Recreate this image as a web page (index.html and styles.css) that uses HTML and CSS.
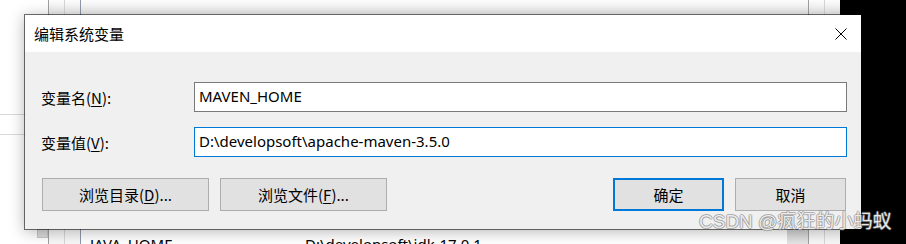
FILE: index.html
```html
<!DOCTYPE html>
<html lang="zh-CN">

<head>
    <meta charset="UTF-8">
    <title>编辑系统变量</title>
    <link rel="stylesheet" href="styles.css">
</head>

<body>

    <div class="skaerm">

        <!-- vinduet bagved (miljøvariabler) -->
        <div class="bagvindue">
            <div class="kol kol-kant">
                <div class="kant-linje top-linje"></div>
                <div class="kant-linje"></div>
                <div class="kant-boks"></div>
            </div>
            <div class="kol kol-smal kol-a">
                <div class="hoved"></div>
            </div>
            <div class="kol kol-smal kol-b">
                <div class="hoved"></div>
            </div>
            <div class="kol kol-liste">
                <div class="hoved"></div>
                <div class="raekke">
                    <span class="navn">JAVA_HOME</span>
                    <span class="vaerdi">D:\developsoft\jdk-17.0.1</span>
                    <span class="rulle-boks"></span>
                </div>
            </div>
            <div class="kol kol-smal kol-c">
                <div class="hoved"></div>
            </div>
            <div class="kol kol-smal kol-d">
                <div class="hoved"></div>
            </div>
        </div>

        <!-- selve dialogen -->
        <div class="dialog">
            <div class="titel">
                <span>编辑系统变量</span>
                <svg class="luk" width="12" height="12" viewBox="0 0 12 12">
                    <path d="M0.5 0.5 L11.5 11.5 M11.5 0.5 L0.5 11.5" stroke="#000" stroke-width="1" fill="none" />
                </svg>
            </div>

            <div class="indhold">
                <div class="felter">
                    <label>变量名(<u>N</u>):</label>
                    <div class="felt">MAVEN_HOME</div>

                    <label>变量值(<u>V</u>):</label>
                    <div class="felt aktiv">D:\developsoft\apache-maven-3.5.0</div>
                </div>

                <div class="knapper">
                    <button class="knap bred">浏览目录(<u>D</u>)...</button>
                    <button class="knap bred">浏览文件(<u>F</u>)...</button>
                    <button class="knap smal ok">确定</button>
                    <button class="knap smal">取消</button>
                </div>
            </div>
        </div>

        <div class="vandmaerke">CSDN @疯狂的小蚂蚁</div>

    </div>

</body></html>
```

FILE: styles.css
```css
body {
    margin: 0;
    background-color: #000;
    font-family: "Noto Sans", "Noto Sans CJK SC", sans-serif;
    font-size: 15px;
    color: #000;
}

.skaerm {
    position: relative;
    width: 906px;
    height: 244px;
    overflow: hidden;
    background-color: #000;
}

/* vinduet bagved */

.bagvindue {
    display: flex;
    width: 840px;
    height: 244px;
    background-color: #fff;
}

.kol {
    display: flex;
    flex-direction: column;
    box-sizing: border-box;
}

.kol-kant {
    width: 48px;
    background-color: #fff;
}

.kant-linje {
    height: 1px;
    background-color: #d9d9d9;
    margin-top: 19px;
}

.kant-linje.top-linje {
    margin-top: 114px;
}

.kant-boks {
    width: 11px;
    height: 9px;
    margin: auto 0 6px auto;
    background-color: #dadada;
    box-sizing: border-box;
    border: 1px solid #c6c6c6;
}

.kol-smal {
    width: 16px;
    background-color: #f7f7f7;
}

.kol-a {
    border-left: 1px solid #a0a0a0;
}

.kol-b {
    border-left: 1px solid #d6d6d6;
}

.kol-c {
    border-left: 1px solid #a0a0a0;
}

.kol-d {
    border-left: 1px solid #d6d6d6;
}

.kol-liste {
    flex: 1;
    border-left: 1px solid #8e98aa;
    background-color: #fff;
}

.hoved {
    height: 14px;
    background: linear-gradient(#fdfdfd, #ebebeb);
}

.raekke {
    display: flex;
    margin-top: auto;
    height: 15px;
    overflow: hidden;
}

.raekke span {
    line-height: 20px;
    padding-top: 5px;
    white-space: nowrap;
}

.navn {
    width: 215px;
    padding-left: 9px;
}

.rulle-boks {
    margin-left: auto;
    width: 21px;
    background: linear-gradient(#cfcfcf, #e6e6e6);
}

/* dialogen */

.dialog {
    position: absolute;
    left: 24px;
    top: 14px;
    width: 838px;
    height: 216px;
    box-sizing: border-box;
    border: 1px solid rgba(0, 0, 0, 0.55);
    background-clip: padding-box;
    background-color: #f0f0f0;
    box-shadow: 0 2px 14px rgba(0, 0, 0, 0.28);
    display: flex;
    flex-direction: column;
}

.titel {
    height: 37px;
    display: flex;
    align-items: center;
    padding: 0 14px 0 9px;
    background-color: #fff;
    font-family: "Noto Sans CJK SC", sans-serif;
}

.luk {
    margin-left: auto;
}

.indhold {
    padding: 30px 14px 0 16px;
}

.felter {
    display: grid;
    grid-template-columns: 153px 653px;
    grid-row-gap: 15px;
    align-items: center;
}

label {
    font-family: "Noto Sans CJK SC", sans-serif;
}

label u,
.knap u {
    text-underline-offset: 2px;
}

.felt {
    height: 30px;
    box-sizing: border-box;
    border: 1px solid #7a7a7a;
    background-color: #fff;
    padding-left: 4px;
    line-height: 27px;
    white-space: nowrap;
}

.felt.aktiv {
    border-color: #0078d7;
}

.knapper {
    display: flex;
    gap: 11px;
    margin: 21px 1px 0 1px;
}

.knap {
    height: 33px;
    box-sizing: border-box;
    border: 1px solid #adadad;
    background-color: #e1e1e1;
    font-family: "Noto Sans CJK SC", sans-serif;
    font-size: 15px;
    color: #000;
    padding: 0;
}

.bred {
    width: 167px;
}

.smal {
    width: 111px;
}

.knap.ok {
    margin-left: auto;
    border: 2px solid #0078d7;
}

/* vandmærke */

.vandmaerke {
    position: absolute;
    left: 699px;
    top: 211px;
    font-family: "Liberation Sans", "Noto Sans CJK SC", sans-serif;
    font-size: 19px;
    line-height: 22px;
    white-space: nowrap;
    color: rgba(255, 255, 255, 0.85);
    text-shadow: 1px 0 rgba(120, 120, 120, 0.55), -1px 0 rgba(120, 120, 120, 0.55), 0 1px rgba(120, 120, 120, 0.55), 0 -1px rgba(120, 120, 120, 0.55);
}
```
